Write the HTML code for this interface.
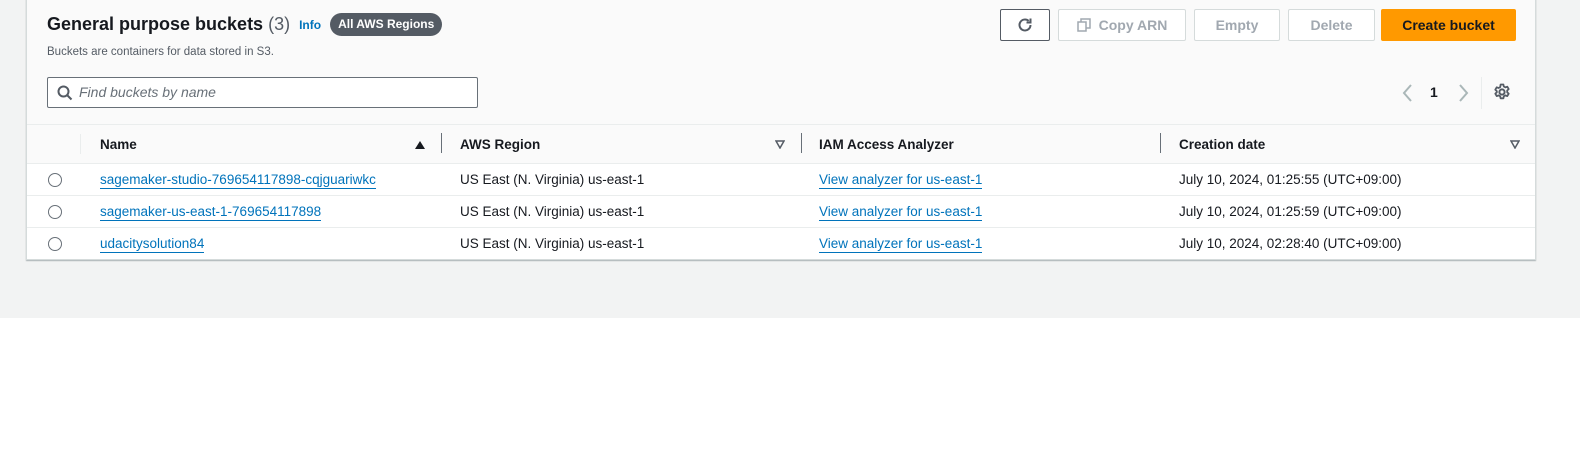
<!DOCTYPE html>
<html><head><meta charset="utf-8"><style>
*{margin:0;padding:0;box-sizing:border-box}
body{width:1580px;height:473px;background:#fff;font-family:"Liberation Sans",sans-serif;color:#16191f;position:relative;overflow:hidden}
.bg{position:absolute;left:0;top:0;width:1580px;height:318px;background:#f2f3f3}
.panel{position:absolute;left:26px;top:-2px;width:1510px;height:262px;background:#fafafa;border:1px solid #d5dbdb;border-top:none;box-shadow:0 1px 1px rgba(0,28,36,.3)}
.abs{position:absolute;white-space:nowrap}
.btn{position:absolute;top:9px;height:32px;border:1px solid #d5dbdb;border-radius:2px;background:#fff;color:#a1a8b0;font-weight:700;font-size:14px;display:flex;align-items:center;justify-content:center}
.row{position:absolute;left:27px;width:1508px;height:32px;background:#fff;border-top:1px solid #eaeded;font-size:13.5px}
.row .c{position:absolute;top:8px;white-space:nowrap}
a{color:#0073bb;text-decoration:none;border-bottom:1px solid #0073bb;padding-bottom:1px}
.radio{position:absolute;left:21px;top:9px;width:14px;height:14px;border:1.5px solid #687078;border-radius:50%}
.th{position:absolute;top:137px;font-weight:700;font-size:13.5px}
.div{position:absolute;top:133px;width:1px;height:20px;background:#687078}
</style></head><body>
<div class="bg"></div>
<div class="panel"></div>
<div class="abs" style="left:47px;top:13px;display:flex;align-items:center">
<span style="font-size:18px;font-weight:700">General purpose buckets</span><span style="font-size:18px;color:#545b64;margin-left:5px">(3)</span>
<span style="font-size:12px;font-weight:700;color:#0073bb;margin-left:9px">Info</span>
<span style="margin-left:9px;height:23px;padding:0 8px;border-radius:12px;background:#545b64;color:#fff;font-size:12px;font-weight:700;line-height:23px">All AWS Regions</span></div>
<div class="abs" style="left:47px;top:46px;font-size:11.5px;color:#545b64">Buckets are containers for data stored in S3.</div>
<div class="abs" style="left:47px;top:77px;width:431px;height:31px;border:1px solid #687078;border-radius:2px;background:#fff">
<svg style="position:absolute;left:9px;top:7px" width="16" height="16" viewBox="0 0 16 16"><circle cx="6.5" cy="6.5" r="5" fill="none" stroke="#545b64" stroke-width="2"/><path d="M10 10l4.5 4.5" stroke="#545b64" stroke-width="2"/></svg>
<span style="position:absolute;left:31px;top:6px;font-style:italic;color:#687078;font-size:14px">Find buckets by name</span></div>
<div class="btn" style="left:1000px;width:50px;border-color:#545b64"><svg width="18" height="18" viewBox="0 0 18 18"><path d="M14.5 9a5.5 5.5 0 1 1-1.8-4.1" fill="none" stroke="#545b64" stroke-width="2"/><path d="M14.5 2.5v4h-4" fill="none" stroke="#545b64" stroke-width="2"/></svg></div>
<div class="btn" style="left:1058px;width:128px"><svg width="14" height="14" viewBox="0 0 14 14" style="margin-right:8px"><rect x="1" y="4" width="8" height="9" fill="none" stroke="#a1a8b0" stroke-width="1.5"/><path d="M4 4V1h9v9h-4" fill="none" stroke="#a1a8b0" stroke-width="1.5"/></svg>Copy ARN</div>
<div class="btn" style="left:1194px;width:86px">Empty</div>
<div class="btn" style="left:1288px;width:87px">Delete</div>
<div class="btn" style="left:1381px;width:135px;background:#ff9900;border-color:#ff9900;color:#16191f">Create bucket</div>
<svg class="abs" style="left:1402px;top:84px" width="12" height="18" viewBox="0 0 12 18"><path d="M9 1L2 9l7 8" fill="none" stroke="#aab7b8" stroke-width="2"/></svg>
<div class="abs" style="left:1430px;top:84px;font-size:14px;font-weight:700">1</div>
<svg class="abs" style="left:1457px;top:84px" width="12" height="18" viewBox="0 0 12 18"><path d="M3 1l7 8-7 8" fill="none" stroke="#aab7b8" stroke-width="2"/></svg>
<div class="abs" style="left:1481px;top:77px;width:1px;height:32px;background:#eaeded"></div>
<svg class="abs" style="left:1493px;top:83px" width="18" height="18" viewBox="0 0 18 18"><circle cx="9" cy="9" r="2.6" fill="none" stroke="#545b64" stroke-width="2"/><path d="M7.6 1.5h2.8l.4 2 1.6.9 1.9-.7 1.4 2.4-1.5 1.4v1.8l1.5 1.4-1.4 2.4-1.9-.7-1.6.9-.4 2H7.6l-.4-2-1.6-.9-1.9.7-1.4-2.4 1.5-1.4V8.1L2.3 6.7l1.4-2.4 1.9.7 1.6-.9z" fill="none" stroke="#545b64" stroke-width="1.8" stroke-linejoin="round"/></svg>
<div class="abs" style="left:27px;top:124px;width:1508px;height:1px;background:#eaeded"></div>
<div class="abs" style="left:80px;top:134px;width:1px;height:20px;background:#eaeded"></div>
<div class="th" style="left:100px">Name</div>
<svg class="abs" style="left:414px;top:140px" width="12" height="10"><path d="M1 9h10L6 1z" fill="#16191f"/></svg>
<div class="div" style="left:441px"></div>
<div class="th" style="left:460px">AWS Region</div>
<svg class="abs" style="left:775px;top:140px" width="10" height="9"><path d="M1 1h8L5 8z" fill="none" stroke="#545b64" stroke-width="1.5"/></svg>
<div class="div" style="left:801px"></div>
<div class="th" style="left:819px">IAM Access Analyzer</div>
<div class="div" style="left:1160px"></div>
<div class="th" style="left:1179px">Creation date</div>
<svg class="abs" style="left:1510px;top:140px" width="10" height="9"><path d="M1 1h8L5 8z" fill="none" stroke="#545b64" stroke-width="1.5"/></svg>
<div class="row" style="top:163px"><div class="radio"></div><div class="c" style="left:73px"><a>sagemaker-studio-769654117898-cqjguariwkc</a></div><div class="c" style="left:433px">US East (N. Virginia) us-east-1</div><div class="c" style="left:792px"><a>View analyzer for us-east-1</a></div><div class="c" style="left:1152px">July 10, 2024, 01:25:55 (UTC+09:00)</div></div>
<div class="row" style="top:195px"><div class="radio"></div><div class="c" style="left:73px"><a>sagemaker-us-east-1-769654117898</a></div><div class="c" style="left:433px">US East (N. Virginia) us-east-1</div><div class="c" style="left:792px"><a>View analyzer for us-east-1</a></div><div class="c" style="left:1152px">July 10, 2024, 01:25:59 (UTC+09:00)</div></div>
<div class="row" style="top:227px"><div class="radio"></div><div class="c" style="left:73px"><a>udacitysolution84</a></div><div class="c" style="left:433px">US East (N. Virginia) us-east-1</div><div class="c" style="left:792px"><a>View analyzer for us-east-1</a></div><div class="c" style="left:1152px">July 10, 2024, 02:28:40 (UTC+09:00)</div></div>
</body></html>
